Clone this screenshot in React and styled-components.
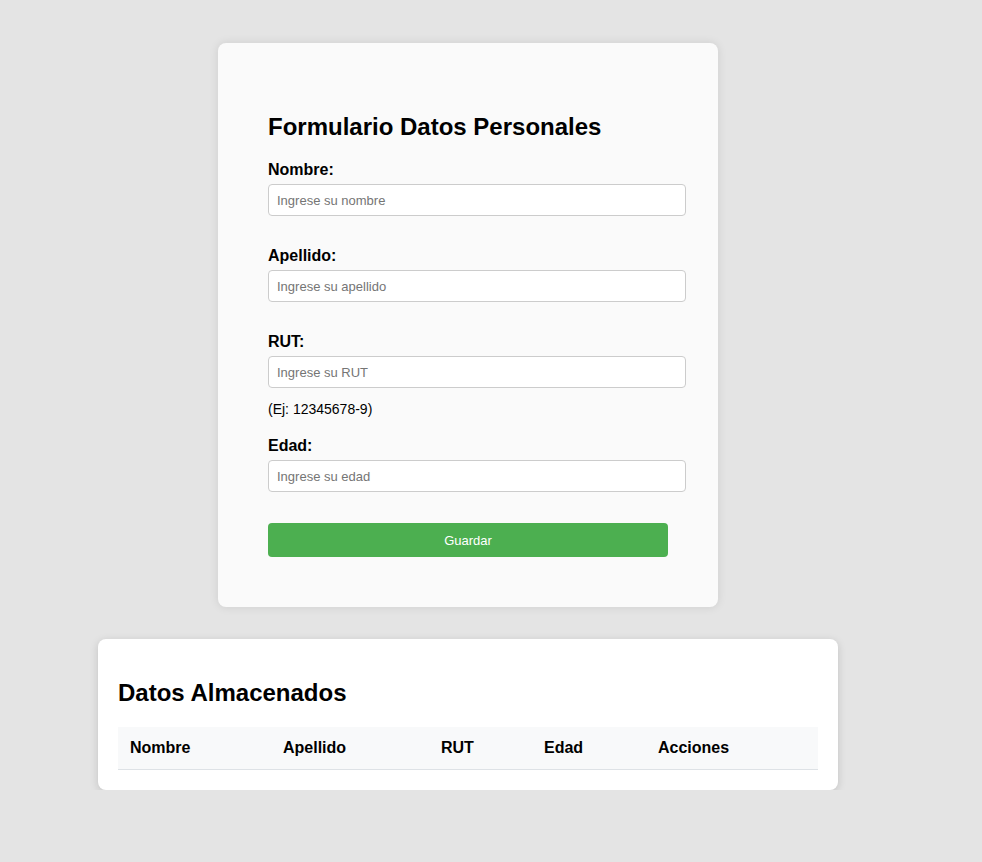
import React from "react";
import styled, { createGlobalStyle } from "styled-components";

const GlobalStyle = createGlobalStyle`
  body {
    margin: 0;
    background: #e4e4e4;
    font-family: "Liberation Sans", Arial, sans-serif;
  }
`;

const Page = styled.div`
  width: 936px;
  padding-top: 43px;
  display: flex;
  flex-direction: column;
  align-items: center;
  gap: 32px;
`;

const FormCard = styled.div`
  width: 400px;
  padding: 50px;
  background: #fafafa;
  border-radius: 8px;
  box-shadow: 0 0 10px rgba(0, 0, 0, 0.1);
`;

const Title = styled.h2`
  font-size: 24px;
  line-height: 27px;
  font-weight: bold;
  margin: 20px 0 20px;
  color: #000;
`;

const Field = styled.div`
  margin-bottom: ${p => p.$gap || 30}px;
`;

const Label = styled.label`
  display: block;
  font-size: 16px;
  line-height: 18px;
  font-weight: bold;
  padding-top: 1px;
  margin-bottom: 5px;
`;

const Input = styled.input`
  display: block;
  box-sizing: border-box;
  width: 418px;
  height: 32px;
  padding: 0 8px;
  border: 1px solid #ccc;
  border-radius: 4px;
  background: #fff;
  font-family: inherit;
  font-size: 13px;
  &::placeholder {
    color: #757575;
  }
`;

const Hint = styled.div`
  font-size: 14px;
  line-height: 16px;
  margin-top: 13px;
  margin-bottom: -1px;
  color: #000;
`;

const SaveButton = styled.button`
  display: block;
  width: 400px;
  height: 34px;
  border: none;
  border-radius: 4px;
  background: #4caf50;
  color: #fff;
  font-family: inherit;
  font-size: 13px;
  cursor: pointer;
`;

const TableCard = styled.div`
  width: 700px;
  padding: 0 20px 20px;
  overflow: hidden;
  background: #fff;
  border-radius: 8px;
  box-shadow: 0 2px 8px rgba(0, 0, 0, 0.15);
`;

const TableTitle = styled(Title)`
  line-height: 28px;
  margin: 40px 0 20px;
`;

const Table = styled.table`
  width: 100%;
  border-collapse: collapse;
  table-layout: fixed;
`;

const Th = styled.th`
  box-sizing: border-box;
  width: ${p => p.$w}px;
  text-align: left;
  padding: 12px;
  font-size: 16px;
  line-height: 18px;
  font-weight: bold;
  background: #f8f9fa;
  border-bottom: 1px solid #dee2e6;
`;

const columns = [
  ["Nombre", 153],
  ["Apellido", 158],
  ["RUT", 103],
  ["Edad", 114],
  ["Acciones", 172]
];

export default function App() {
  return (
    <>
      <GlobalStyle />
      <Page>
        <FormCard>
          <Title>Formulario Datos Personales</Title>
          <form onSubmit={e => e.preventDefault()}>
            <Field>
              <Label>Nombre:</Label>
              <Input placeholder="Ingrese su nombre" />
            </Field>
            <Field>
              <Label>Apellido:</Label>
              <Input placeholder="Ingrese su apellido" />
            </Field>
            <Field $gap={20}>
              <Label>RUT:</Label>
              <Input placeholder="Ingrese su RUT" />
              <Hint>(Ej: 12345678-9)</Hint>
            </Field>
            <Field $gap={31}>
              <Label>Edad:</Label>
              <Input placeholder="Ingrese su edad" />
            </Field>
            <SaveButton type="submit">Guardar</SaveButton>
          </form>
        </FormCard>
        <TableCard>
          <TableTitle>Datos Almacenados</TableTitle>
          <Table>
            <thead>
              <tr>
                {columns.map(([name, w]) => (
                  <Th key={name} $w={w}>
                    {name}
                  </Th>
                ))}
              </tr>
            </thead>
            <tbody />
          </Table>
        </TableCard>
      </Page>
    </>
  );
}
